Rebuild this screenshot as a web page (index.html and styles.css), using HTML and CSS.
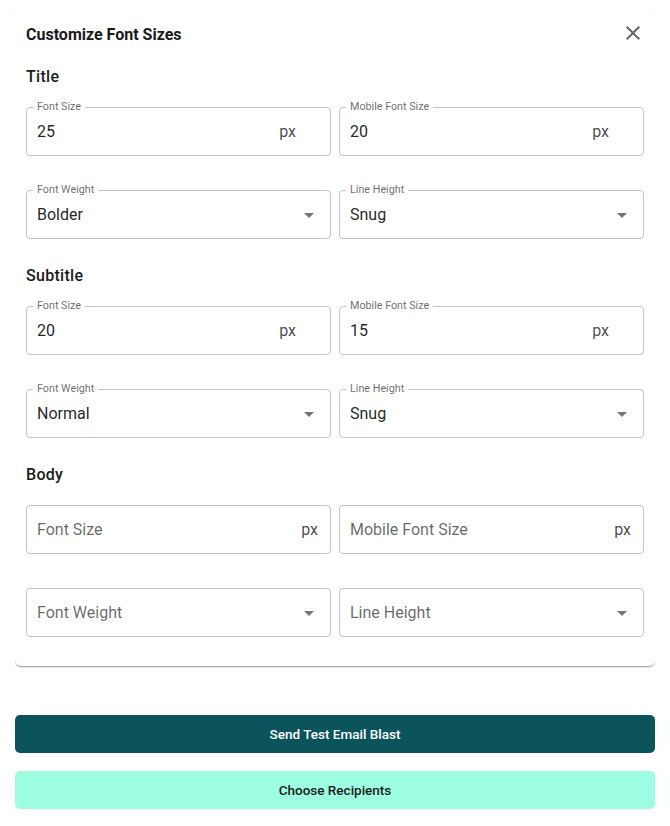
FILE: index.html
```html
<!DOCTYPE html>
<html lang="en">
<head>
<meta charset="utf-8">
<title>Customize Font Sizes</title>
<link rel="stylesheet" href="styles.css">
</head>
<body>
<div class="card">
  <div class="card-header">
    <h2 class="card-title">Customize Font Sizes</h2>
    <button class="close-btn" aria-label="Close">
      <svg viewBox="0 0 24 24" width="24" height="24"><path d="M19 6.41 17.59 5 12 10.59 6.41 5 5 6.41 10.59 12 5 17.59 6.41 19 12 13.41 17.59 19 19 17.59 13.41 12z"/></svg>
    </button>
  </div>

  <section class="group">
    <h3 class="group-title">Title</h3>
    <div class="grid">
      <div class="field"><span class="label">Font Size</span><span class="value">25</span><span class="unit">px</span></div>
      <div class="field"><span class="label">Mobile Font Size</span><span class="value">20</span><span class="unit">px</span></div>
      <div class="field select"><span class="label">Font Weight</span><span class="value">Bolder</span><svg class="arrow" viewBox="0 0 24 24"><path d="M7 10l5 5 5-5z"/></svg></div>
      <div class="field select"><span class="label">Line Height</span><span class="value">Snug</span><svg class="arrow" viewBox="0 0 24 24"><path d="M7 10l5 5 5-5z"/></svg></div>
    </div>
  </section>

  <section class="group">
    <h3 class="group-title">Subtitle</h3>
    <div class="grid">
      <div class="field"><span class="label">Font Size</span><span class="value">20</span><span class="unit">px</span></div>
      <div class="field"><span class="label">Mobile Font Size</span><span class="value">15</span><span class="unit">px</span></div>
      <div class="field select"><span class="label">Font Weight</span><span class="value">Normal</span><svg class="arrow" viewBox="0 0 24 24"><path d="M7 10l5 5 5-5z"/></svg></div>
      <div class="field select"><span class="label">Line Height</span><span class="value">Snug</span><svg class="arrow" viewBox="0 0 24 24"><path d="M7 10l5 5 5-5z"/></svg></div>
    </div>
  </section>

  <section class="group">
    <h3 class="group-title">Body</h3>
    <div class="grid">
      <div class="field empty"><span class="placeholder">Font Size</span><span class="unit">px</span></div>
      <div class="field empty"><span class="placeholder">Mobile Font Size</span><span class="unit">px</span></div>
      <div class="field select"><span class="placeholder">Font Weight</span><svg class="arrow" viewBox="0 0 24 24"><path d="M7 10l5 5 5-5z"/></svg></div>
      <div class="field select"><span class="placeholder">Line Height</span><svg class="arrow" viewBox="0 0 24 24"><path d="M7 10l5 5 5-5z"/></svg></div>
    </div>
  </section>
</div>

<div class="actions">
  <button class="btn btn-primary">Send Test Email Blast</button>
  <button class="btn btn-secondary">Choose Recipients</button>
</div>
</body>
</html>
```

FILE: styles.css
```css
* { box-sizing: border-box; }

body {
  margin: 10px 15px;
  font-family: Roboto, "Liberation Sans", Arial, sans-serif;
  color: rgba(0, 0, 0, 0.87);
  background: #fff;
}

.card {
  background: #fff;
  border-radius: 6px;
  box-shadow: 0 2px 1px -1px rgba(0,0,0,.2), 0 1px 1px 0 rgba(0,0,0,.14), 0 1px 3px 0 rgba(0,0,0,.12);
  padding: 13px 11px 29px;
}

.card-header {
  display: flex;
  align-items: center;
  justify-content: space-between;
  height: 24px;
}

.card-title {
  margin: 0;
  font-size: 16px;
  line-height: 24px;
  font-weight: 700;
  color: #1a1a1a;
}

.close-btn {
  border: 0;
  background: none;
  padding: 0;
  margin: -5px -1px 0 0;
  width: 24px;
  height: 24px;
  display: flex;
  cursor: pointer;
}
.close-btn svg { fill: #666; }

.group { margin-top: 18px; }
.group + .group { margin-top: 25px; }

.group-title {
  margin: 0 0 18px;
  font-size: 16px;
  line-height: 24px;
  font-weight: 500;
  letter-spacing: 0.3px;
  color: #1a1a1a;
}

.grid {
  display: grid;
  grid-template-columns: 1fr 1fr;
  column-gap: 8px;
  row-gap: 34px;
}

.field {
  position: relative;
  height: 49px;
  border: 1px solid rgba(0, 0, 0, 0.23);
  border-radius: 4px;
  display: flex;
  align-items: center;
  padding: 0 34px 0 10px;
  font-size: 16px;
}

.field.empty { padding-right: 12px; }
.field.select { padding-right: 9px; }

.label {
  position: absolute;
  left: 6px;
  top: -8px;
  padding: 0 4px;
  background: #fff;
  font-size: 10.75px;
  line-height: 14px;
  color: rgba(0, 0, 0, 0.6);
}

.value { flex: 1; color: rgba(0, 0, 0, 0.87); }
.placeholder { flex: 1; color: rgba(0, 0, 0, 0.6); }

.unit { color: rgba(0, 0, 0, 0.72); }

.arrow {
  width: 24px;
  height: 24px;
  fill: rgba(0, 0, 0, 0.54);
}

.actions {
  margin-top: 49px;
  display: flex;
  flex-direction: column;
  gap: 18px;
}

.btn {
  height: 38px;
  border: 0;
  border-radius: 5px;
  font-family: Roboto, "Liberation Sans", Arial, sans-serif;
  font-size: 13.5px;
  font-weight: 500;
  cursor: pointer;
}

.btn-primary { background: #0b545b; color: #fff; }
.btn-secondary { background: #9cfde0; color: #1a1a1a; }
```
